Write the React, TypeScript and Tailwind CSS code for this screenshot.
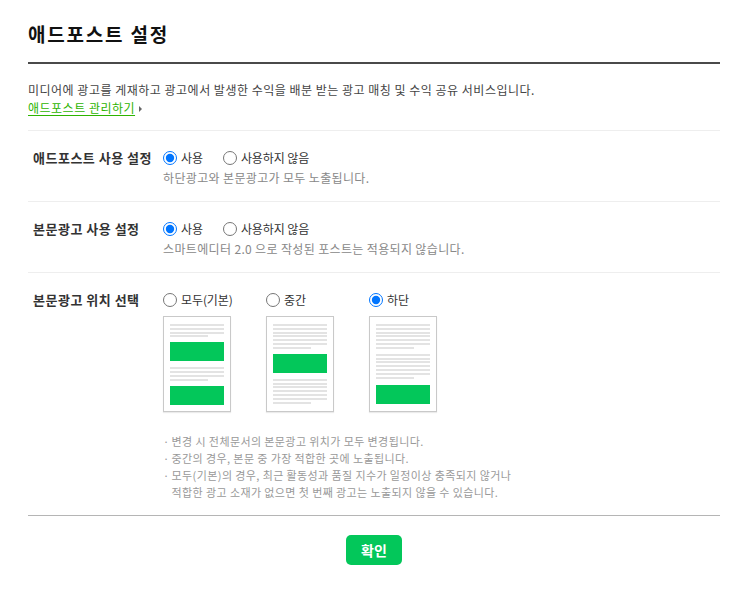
import { useState } from "react"

type Pos = "all" | "middle" | "bottom"

const FONT = "font-['Noto_Sans_CJK_KR','Noto_Sans',sans-serif]"

function Lines({ count }: { count: number }) {
  return (
    <div className="flex flex-col gap-[1.8px]">
      {Array.from({ length: count }).map((_, i) => (
        <div
          key={i}
          className={i === count - 1 ? "h-[2px] w-[38px] bg-[#e3e3e3]" : "h-[2px] w-full bg-[#e3e3e3]"}
        />
      ))}
    </div>
  )
}

function AdBox() {
  return <div className="h-[19px] w-full bg-[#03c75a]" />
}

function Thumb({ kind }: { kind: Pos }) {
  return (
    <div className="flex h-[96px] w-[68px] flex-col border border-[#c9c9c9] bg-white px-[6px] pt-[7px] shadow-[0_1px_1px_rgba(0,0,0,0.08)]">
      {kind === "all" && (
        <>
          <Lines count={4} />
          <div className="mt-[5px]"><AdBox /></div>
          <div className="mt-[6px]"><Lines count={4} /></div>
          <div className="mt-[5px]"><AdBox /></div>
        </>
      )}
      {kind === "middle" && (
        <>
          <Lines count={7} />
          <div className="mt-[5px]"><AdBox /></div>
          <div className="mt-[6px]"><Lines count={7} /></div>
        </>
      )}
      {kind === "bottom" && (
        <>
          <Lines count={7} />
          <div className="mt-[5px]"><Lines count={7} /></div>
          <div className="mt-[6px]"><AdBox /></div>
        </>
      )}
    </div>
  )
}

function Radio({
  name,
  label,
  checked,
  onChange,
}: {
  name: string
  label: string
  checked: boolean
  onChange: () => void
}) {
  return (
    <label className="flex items-center gap-[4px] text-[12px] tracking-[-0.1px] text-[#333]">
      <input
        type="radio"
        name={name}
        checked={checked}
        onChange={onChange}
        className="h-[14px] w-[14px]"
      />
      <span>{label}</span>
    </label>
  )
}

// one settings row: bold label on the left, controls on the right
function Section({
  title,
  last,
  children,
}: {
  title: string
  last?: boolean
  children: React.ReactNode
}) {
  return (
    <div className={`border-t border-[#eeeeee] pt-[17px] ${last ? "pb-[14px]" : "pb-[13px]"}`}>
      <div className="flex pl-[5px]">
        <div className="w-[130px] shrink-0 text-[13px] font-bold leading-[20px] tracking-[0.5px] text-[#333]">
          {title}
        </div>
        <div className="flex-1">{children}</div>
      </div>
    </div>
  )
}

export default function App() {
  const [usePost, setUsePost] = useState(true)
  const [useBody, setUseBody] = useState(true)
  const [pos, setPos] = useState<Pos>("bottom")

  return (
    <div className={`${FONT} min-h-[592px] w-[743px] bg-white`}>
      <div className="ml-[28px] w-[692px] pt-[22px]">
        <h1 className="text-[19px] font-bold leading-[24px] tracking-[1.8px] text-[#111]">
          애드포스트 설정
        </h1>

        <div className="mt-[16px] border-t-2 border-[#4a4a4a]" />

        {/* Intro */}
        <div className="pt-[17px] pb-[13px] text-[12px] leading-[18px] tracking-[0.5px]">
          <p className="text-[#444]">
            미디어에 광고를 게재하고 광고에서 발생한 수익을 배분 받는 광고 매칭 및 수익 공유 서비스입니다.
          </p>
          <a href="#" className="inline-flex items-center gap-[4px] text-[#2db400]">
            <span className="underline underline-offset-2">애드포스트 관리하기</span>
            <svg width="3" height="6" viewBox="0 0 3 6" className="mt-[1px]">
              <path d="M0 0L3 3L0 6Z" fill="#666" />
            </svg>
          </a>
        </div>

        <Section title="애드포스트 사용 설정">
          <div className="flex h-[20px] items-center gap-[20px]">
            <Radio name="post" label="사용" checked={usePost} onChange={() => setUsePost(true)} />
            <Radio name="post" label="사용하지 않음" checked={!usePost} onChange={() => setUsePost(false)} />
          </div>
          <p className="text-[12px] leading-[20px] tracking-[0.35px] text-[#888]">
            하단광고와 본문광고가 모두 노출됩니다.
          </p>
        </Section>

        <Section title="본문광고 사용 설정">
          <div className="flex h-[20px] items-center gap-[20px]">
            <Radio name="body" label="사용" checked={useBody} onChange={() => setUseBody(true)} />
            <Radio name="body" label="사용하지 않음" checked={!useBody} onChange={() => setUseBody(false)} />
          </div>
          <p className="text-[12px] leading-[20px] tracking-[0.35px] text-[#888]">
            스마트에디터 2.0 으로 작성된 포스트는 적용되지 않습니다.
          </p>
        </Section>

        <Section title="본문광고 위치 선택" last>
          <div className="grid grid-cols-[103px_103px_auto]">
            {([
              ["all", "모두(기본)"],
              ["middle", "중간"],
              ["bottom", "하단"],
            ] as [Pos, string][]).map(([k, label]) => (
              <div key={k} className="flex flex-col">
                <div className="flex h-[20px] items-center">
                  <Radio name="pos" label={label} checked={pos === k} onChange={() => setPos(k)} />
                </div>
                <div className="mt-[6px]">
                  <Thumb kind={k} />
                </div>
              </div>
            ))}
          </div>

          <ul className="mt-[21px] text-[11px] leading-[17px] tracking-[0.4px] text-[#999]">
            <li className="flex gap-[2px]">
              <span>·</span>
              <span>변경 시 전체문서의 본문광고 위치가 모두 변경됩니다.</span>
            </li>
            <li className="flex gap-[2px]">
              <span>·</span>
              <span>중간의 경우, 본문 중 가장 적합한 곳에 노출됩니다.</span>
            </li>
            <li className="flex gap-[2px]">
              <span>·</span>
              <span>
                모두(기본)의 경우, 최근 활동성과 품질 지수가 일정이상 충족되지 않거나
                <br />
                적합한 광고 소재가 없으면 첫 번째 광고는 노출되지 않을 수 있습니다.
              </span>
            </li>
          </ul>
        </Section>

        <div className="border-t border-[#b5b5b5]" />

        <div className="flex justify-center pt-[19px]">
          <button className="h-[30px] w-[56px] rounded-[5px] bg-[#03c75a] text-[14px] font-bold text-white">
            확인
          </button>
        </div>
      </div>
    </div>
  )
}
